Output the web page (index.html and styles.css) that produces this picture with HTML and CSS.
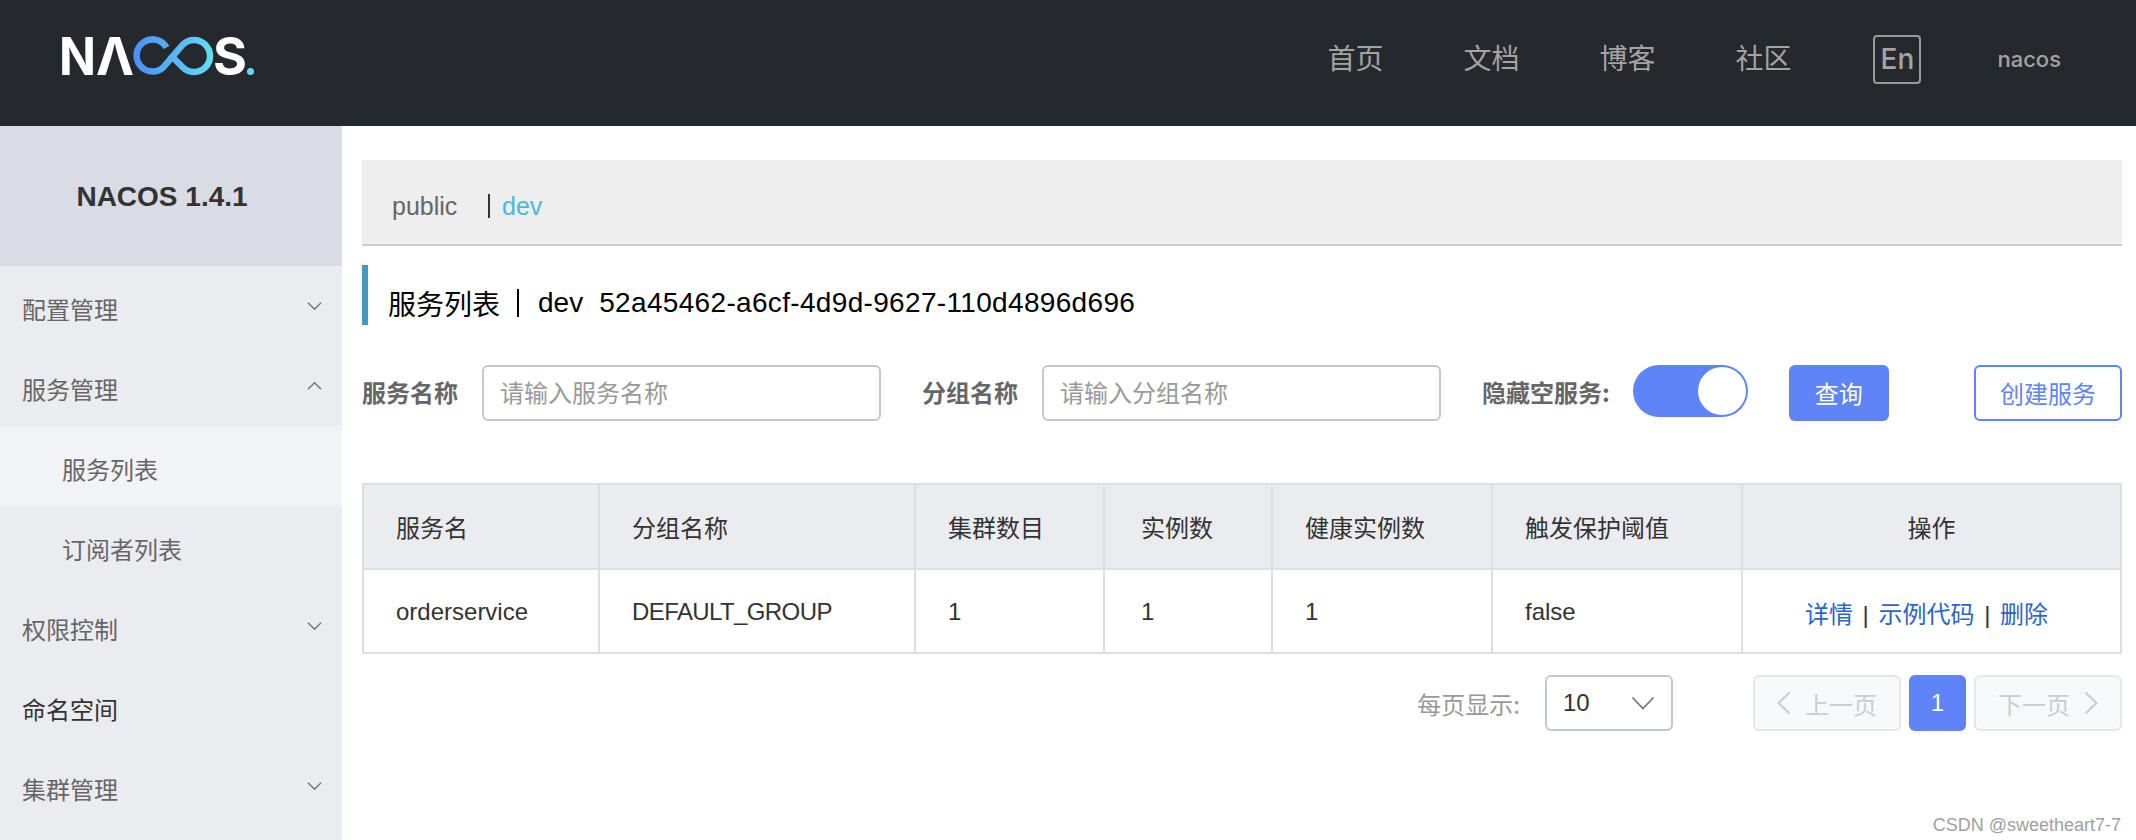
FILE: index.html
```html
<!DOCTYPE html>
<html lang="zh">
<head>
<meta charset="utf-8">
<title>Nacos</title>
<link rel="stylesheet" href="styles.css">
</head>
<body>
<header class="topbar">
  <svg class="logo" width="220" height="100" viewBox="48 6 220 100">
    <defs>
      <linearGradient id="lg" x1="133" x2="213" y1="0" y2="0" gradientUnits="userSpaceOnUse">
        <stop offset="0" stop-color="#4c8df5"/>
        <stop offset="1" stop-color="#62dcf4"/>
      </linearGradient>
    </defs>
    <text class="logo-t" x="59" y="75" textLength="37" lengthAdjust="spacingAndGlyphs">N</text>
    <text class="logo-t" x="96" y="75" textLength="38" lengthAdjust="spacingAndGlyphs">Λ</text>
    <path d="M166.500 47.500A16 16 0 1 0 163.300 67.300L182.700 44.700A16 16 0 1 1 182.700 67.300L170 54.500" fill="none" stroke="url(#lg)" stroke-width="6.500"/>
    <text class="logo-t" x="213" y="75" textLength="34" lengthAdjust="spacingAndGlyphs">S</text>
    <circle cx="250.500" cy="71.500" r="3.500" fill="#62dcf4"/>
  </svg>
  <nav class="topnav">
    <a class="nav-item">首页</a>
    <a class="nav-item">文档</a>
    <a class="nav-item">博客</a>
    <a class="nav-item">社区</a>
    <span class="lang">En</span>
    <span class="user">nacos</span>
  </nav>
</header>
<div class="layout">
  <aside class="sidebar">
    <div class="brand">NACOS 1.4.1</div>
    <ul class="menu">
      <li class="menu-item">配置管理<svg class="chev" viewBox="0 0 16 10"><path d="M1 1.500L8 8.500L15 1.500"/></svg></li>
      <li class="menu-item">服务管理<svg class="chev up" viewBox="0 0 16 10"><path d="M1 8.500L8 1.500L15 8.500"/></svg></li>
      <li class="menu-item sub active">服务列表</li>
      <li class="menu-item sub">订阅者列表</li>
      <li class="menu-item">权限控制<svg class="chev" viewBox="0 0 16 10"><path d="M1 1.500L8 8.500L15 1.500"/></svg></li>
      <li class="menu-item dark">命名空间</li>
      <li class="menu-item">集群管理<svg class="chev" viewBox="0 0 16 10"><path d="M1 1.500L8 8.500L15 1.500"/></svg></li>
    </ul>
  </aside>
  <main class="content">
    <div class="ns-bar"><span class="ns">public</span><span class="ns-sep"></span><span class="ns-cur">dev</span></div>
    <h1 class="title"><span>服务列表</span><span class="title-sep"></span><span>dev</span><span class="title-id">52a45462-a6cf-4d9d-9627-110d4896d696</span></h1>
    <form class="filters">
      <label class="flabel">服务名称</label>
      <input class="finput" placeholder="请输入服务名称">
      <label class="flabel l2">分组名称</label>
      <input class="finput" placeholder="请输入分组名称">
      <label class="flabel l3">隐藏空服务:</label>
      <span class="switch"><span class="knob"></span></span>
      <button class="btn primary" type="button">查询</button>
      <button class="btn outline" type="button">创建服务</button>
    </form>
    <table class="grid">
      <colgroup>
        <col class="c1"><col class="c2"><col class="c3"><col class="c4"><col class="c5"><col class="c6"><col>
      </colgroup>
      <thead>
        <tr><th>服务名</th><th>分组名称</th><th>集群数目</th><th class="cell-shift">实例数</th><th>健康实例数</th><th>触发保护阈值</th><th class="center">操作</th></tr>
      </thead>
      <tbody>
        <tr><td>orderservice</td><td class="group">DEFAULT_GROUP</td><td>1</td><td class="cell-shift">1</td><td>1</td><td>false</td>
          <td class="center actions"><a class="link">详情</a> | <a class="link">示例代码</a> | <a class="link">删除</a></td></tr>
      </tbody>
    </table>
    <div class="pager">
      <span class="per">每页显示:</span>
      <span class="select">10<svg class="sel-chev" viewBox="0 0 24 14"><path d="M1.500 1.500L12 12.500L22.500 1.500"/></svg></span>
      <span class="pbtn prev"><svg class="pg-ic" viewBox="0 0 14 24"><path d="M12.500 1.500L1.500 12L12.500 22.500"/></svg>上一页</span>
      <span class="pnum">1</span>
      <span class="pbtn next">下一页<svg class="pg-ic" viewBox="0 0 14 24"><path d="M1.500 1.500L12.500 12L1.500 22.500"/></svg></span>
    </div>
  </main>
</div>
<div class="watermark">CSDN @sweetheart7-7</div>
</body>
</html>
```
FILE: styles.css
```css
* { box-sizing: border-box; }
html, body { margin: 0; height: 840px; overflow: hidden; }
body { position: relative; background: #fff; color: #333; font-family: "Liberation Sans", "Noto Sans CJK SC", sans-serif; font-size: 24px; }
.topbar { height: 126px; background: #25282d; display: flex; align-items: center; justify-content: space-between; padding-left: 48px; }
.logo { display: block; margin-top: -14px; }
.logo-t { font-family: "Inter", sans-serif; font-weight: 700; font-size: 52px; fill: #fff; }
.topnav { display: flex; align-items: center; height: 100%; padding-bottom: 12px; }
.nav-item { width: 136px; color: #a3a3a3; font-family: "Noto Sans CJK SC", sans-serif; font-size: 28px; }
.lang { width: 48px; height: 49px; margin-left: 2px; margin-top: 4px; border: 2px solid #999; border-radius: 4px; color: #a3a3a3; font-family: "Inter", sans-serif; font-size: 28px; font-weight: 500; display: flex; align-items: center; justify-content: center; }
.user { margin-left: 76px; margin-right: 75px; margin-top: 4px; color: #a3a3a3; font-family: "Inter", sans-serif; font-size: 22px; font-weight: 500; }
.layout { display: flex; height: 714px; }
.sidebar { width: 342px; flex: none; background: #ebecf0; }
.brand { height: 140px; background: #d9dce4; display: flex; align-items: center; justify-content: center; padding: 2px 18px 0 0; font-size: 28px; font-weight: 700; color: #333; }
.menu { list-style: none; margin: 0; padding: 0; }
.menu-item { height: 80px; padding: 5px 20px 0 22px; display: flex; align-items: center; justify-content: space-between; color: #666; font-size: 24px; font-family: "Noto Sans CJK SC", sans-serif; }
.menu-item.sub { padding-left: 62px; }
.menu-item.active { background: #f2f3f7; }
.menu-item.dark { color: #333; }
.chev { width: 15px; height: 10px; margin-top: -6px; fill: none; stroke: #777; stroke-width: 1.600; }
.content { flex: 1; padding: 34px 14px 0 20px; min-width: 0; }
.ns-bar { height: 86px; background: #eee; border-bottom: 2px solid #ccc; display: flex; align-items: center; padding-left: 30px; padding-top: 8px; font-size: 25px; }
.ns { color: #666; width: 96px; }
.ns-sep { width: 2px; height: 24px; background: #333; margin-right: 12px; }
.ns-cur { color: #4cb8dc; }
.title { margin: 19px 0 0; height: 60px; border-left: 6px solid #4298c9; padding-left: 20px; display: flex; align-items: center; padding-top: 15px; font-size: 28px; font-weight: 400; color: #000; }
.title-sep { width: 2px; height: 28px; background: #000; margin: 0 19px 0 17px; }
.title-id { margin-left: 16px; letter-spacing: .33px; }
.filters { display: flex; align-items: flex-start; margin-top: 40px; height: 56px; }
.flabel { font-size: 24px; font-weight: 700; color: #666; line-height: 54px; white-space: nowrap; font-family: "Noto Sans CJK SC", sans-serif; }
.finput { margin-left: 24px; height: 56px; border: 2px solid #c4c6cf; border-radius: 6px; padding: 0 16px 3px; font-size: 24px; color: #333; font-family: "Noto Sans CJK SC", sans-serif; width: 399px; outline: none; background: #fff; }
.finput::placeholder { color: #999; }
.finput + .l2 { margin-left: 41px; }
.l2 + .finput { width: 399px; }
.l3 { margin-left: 41px; }
.switch { margin-left: 23px; width: 115px; height: 52px; border-radius: 26px; background: #5f84f8; display: flex; align-items: center; justify-content: flex-end; padding-right: 2px; }
.knob { width: 48px; height: 48px; border-radius: 50%; background: #fff; }
.btn { height: 56px; border-radius: 6px; font-size: 24px; font-family: "Noto Sans CJK SC", sans-serif; padding: 0 0 2px; }
.primary { width: 100px; margin-left: 41px; background: #5f84f8; border: none; color: #fff; }
.outline { width: 148px; margin-left: auto; background: #fff; border: 2px solid #5f84f8; color: #5f84f8; }
.grid { width: 100%; margin-top: 62px; border-collapse: collapse; table-layout: fixed; font-size: 24px; }
.c1 { width: 236px; } .c2 { width: 316px; } .c3 { width: 189px; } .c4 { width: 168px; } .c5 { width: 220px; } .c6 { width: 250px; }
.grid th, .grid td { border: 2px solid #dcdee3; padding: 0 32px; text-align: left; font-weight: 400; color: #333; }
.grid th { height: 85px; background: #ebecf0; font-family: "Noto Sans CJK SC", sans-serif; }
.grid td { height: 84px; padding-top: 2px; }
.grid .center { text-align: center; padding: 2px 0 0; }
.grid th.center { padding: 0; }
.grid .cell-shift { padding-left: 36px; }
.grid .group { letter-spacing: -.6px; }
.grid .actions { word-spacing: 3px; padding-right: 10px; }
.link { color: #2a65c8; font-family: "Noto Sans CJK SC", sans-serif; }
.pager { display: flex; align-items: center; margin-top: 21px; height: 56px; justify-content: flex-end; }
.per { color: #999; margin-right: 25px; font-family: "Noto Sans CJK SC", sans-serif; }
.select { width: 128px; height: 56px; border: 2px solid #c4c6cf; border-radius: 6px; padding: 0 16px; display: flex; align-items: center; justify-content: space-between; color: #333; margin-right: 80px; }
.sel-chev { width: 24px; height: 14px; fill: none; stroke: #777; stroke-width: 1.800; margin-left: auto; }
.pbtn { width: 148px; height: 56px; background: #f7f8fa; border: 2px solid #e6e7eb; border-radius: 6px; color: #ccc; display: flex; align-items: center; justify-content: center; gap: 14px; font-family: "Noto Sans CJK SC", sans-serif; }
.pg-ic { width: 14px; height: 24px; fill: none; stroke: #ccc; stroke-width: 2; }
.pnum { width: 57px; height: 56px; margin: 0 8px; background: #5f84f8; border-radius: 6px; color: #fff; display: flex; align-items: center; justify-content: center; }
.watermark { position: absolute; right: 15px; bottom: 4px; font-size: 18px; color: #a0a0a0; }
```
